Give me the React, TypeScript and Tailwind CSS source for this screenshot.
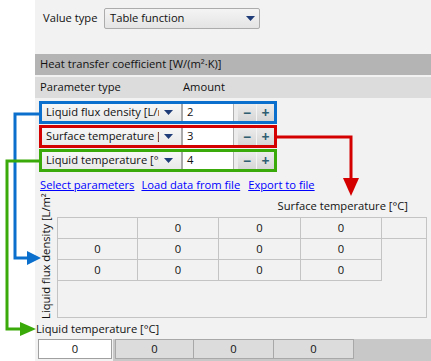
import React from "react";

const font = { fontFamily: '"Open Sans", "Liberation Sans", sans-serif' };

function Tri() {
  return (
    <svg width="9" height="5" viewBox="0 0 9 5" className="shrink-0">
      <polygon points="0,0 9,0 4.5,5" fill="#1f3c78" />
    </svg>
  );
}

function ParamRow({ label, value, color }: { label: string; value: string; color: string }) {
  return (
    <div className={`w-[238px] h-[23px] border-[3px] flex ${color}`}>
      <div className="w-[139px] h-full flex items-center justify-between pl-[4px] pr-[8px] bg-gradient-to-b from-[#f7f7f7] to-[#e9e9e9] overflow-hidden">
        <span className="whitespace-nowrap overflow-hidden w-[113px]">{label}</span>
        <Tri />
      </div>
      <div className="w-[2px] h-full bg-[#a9a9a9]" />
      <div className="w-[50px] h-full bg-white flex items-center pl-[4px]">{value}</div>
      <div className="w-[1px] h-full bg-[#b0b0b0]" />
      <div className="w-[4px] h-full bg-[#ececec]" />
      <div className="w-[18px] h-full flex items-center justify-center bg-gradient-to-b from-[#ececec] to-[#d6d6d6] text-[#2f5e72] font-bold text-[14px] leading-none">−</div>
      <div className="w-[1px] h-full bg-[#f4f4f4]" />
      <div className="w-[17px] h-full flex items-center justify-center bg-gradient-to-b from-[#ececec] to-[#d6d6d6] text-[#2f5e72] font-bold text-[14px] leading-none">+</div>
    </div>
  );
}

function Cell({ w, v, last }: { w: string; v?: string; last?: boolean }) {
  return (
    <div className={`${w} h-full flex items-center justify-center border-[#c4c4c4] ${last ? "" : "border-r"}`}>
      {v}
    </div>
  );
}

export default function App() {
  return (
    <div className="relative w-[431px] h-[361px] bg-white overflow-hidden flex text-[11.2px] text-[#111]" style={font}>
      <div className="w-[35px] shrink-0" />
      <div className="w-[396px] bg-[#f2f2f2] flex flex-col">
        <div className="h-[21px] mt-[8px] flex items-center">
          <span className="pl-[8px] w-[69px]">Value type</span>
          <div className="w-[156px] h-[21px] rounded-[2px] border border-[#acacac] bg-gradient-to-b from-[#f4f4f4] to-[#e4e4e4] flex items-center justify-between pl-[5px] pr-[4px]">
            <span>Table function</span>
            <Tri />
          </div>
        </div>
        <div className="mt-[25px] h-[21px] bg-[#b4b4b4] flex items-center pl-[5px]">
          Heat transfer coefficient [W/(m²·K)]
        </div>
        <div className="mt-[2px] h-[21px] bg-[#dcdcdc] flex items-center">
          <span className="pl-[5px] w-[148px]">Parameter type</span>
          <span>Amount</span>
        </div>
        <div className="mt-[3px] pl-[4px] flex flex-col gap-[1px]">
          <ParamRow label="Liquid flux density [L/m²·s)]" value="2" color="border-[#0a6fcd]" />
          <ParamRow label="Surface temperature [°C]" value="3" color="border-[#d40000]" />
          <ParamRow label="Liquid temperature [°C]" value="4" color="border-[#3aaa0a]" />
        </div>
        <div className="mt-[5px] h-[16px] pl-[5px] flex items-center text-[#0000ff] underline">
          <span>Select parameters</span>
          <span className="ml-[7px]">Load data from file</span>
          <span className="ml-[8px]">Export to file</span>
        </div>
        <div className="flex">
          <div className="w-[22px] h-[126px] overflow-hidden flex flex-col justify-end items-center">
            <span className="[writing-mode:vertical-rl] rotate-180 whitespace-nowrap pr-[1px]">
              Liquid flux density [L/m²·s)]
            </span>
          </div>
          <div className="w-[370px] flex flex-col">
            <div className="h-[24px] flex items-center justify-end pr-[19px] pt-[2px]">Surface temperature [°C]</div>
            <div className="h-[101px] border border-[#c4c4c4] flex flex-col">
              <div className="h-[21px] flex border-b border-[#c4c4c4]">
                <Cell w="w-[80px]" />
                <Cell w="w-[81px]" v="0" />
                <Cell w="w-[82px]" v="0" />
                <Cell w="w-[81px]" v="0" />
                <Cell w="flex-1" last />
              </div>
              {[0, 1].map((i) => (
                <div key={i} className="h-[21px] w-[324px] flex border-b border-[#c4c4c4]">
                  <Cell w="w-[80px]" v="0" />
                  <Cell w="w-[81px]" v="0" />
                  <Cell w="w-[82px]" v="0" />
                  <Cell w="w-[81px]" v="0" />
                </div>
              ))}
            </div>
          </div>
        </div>
        <div className="h-[20px] flex items-center pl-[1px]">Liquid temperature [°C]</div>
        <div className="flex-1 flex">
          <div className="ml-[3px] w-[74px] h-[20px] bg-white border border-[#a0a0a0] flex items-center justify-center">0</div>
          <div className="ml-[1px] flex-1 bg-[#c8c8c8] flex items-start">
            <div className="ml-[2px] w-[79px] h-[20px] bg-[#dcdcdc] border border-[#a8a8a8] flex items-center justify-center">0</div>
            <div className="w-[80px] h-[20px] bg-[#dcdcdc] border border-l-0 border-[#a8a8a8] flex items-center justify-center">0</div>
            <div className="w-[80px] h-[20px] bg-[#dcdcdc] border border-l-0 border-[#a8a8a8] flex items-center justify-center">0</div>
          </div>
        </div>
      </div>
      <svg className="absolute left-0 top-0 pointer-events-none" width="431" height="361">
        <polyline points="39,114 15,114 15,258 28,258" fill="none" stroke="#0a6fcd" strokeWidth="3" />
        <polygon points="27,251 41,258 27,265" fill="#0a6fcd" />
        <polyline points="277,137 351,137 351,180" fill="none" stroke="#d40000" strokeWidth="3" />
        <polygon points="343,178 359,178 351,196" fill="#d40000" />
        <polyline points="39,161 7,161 7,329 22,329" fill="none" stroke="#3aaa0a" strokeWidth="3" />
        <polygon points="20,322 36,329 20,336" fill="#3aaa0a" />
      </svg>
    </div>
  );
}
